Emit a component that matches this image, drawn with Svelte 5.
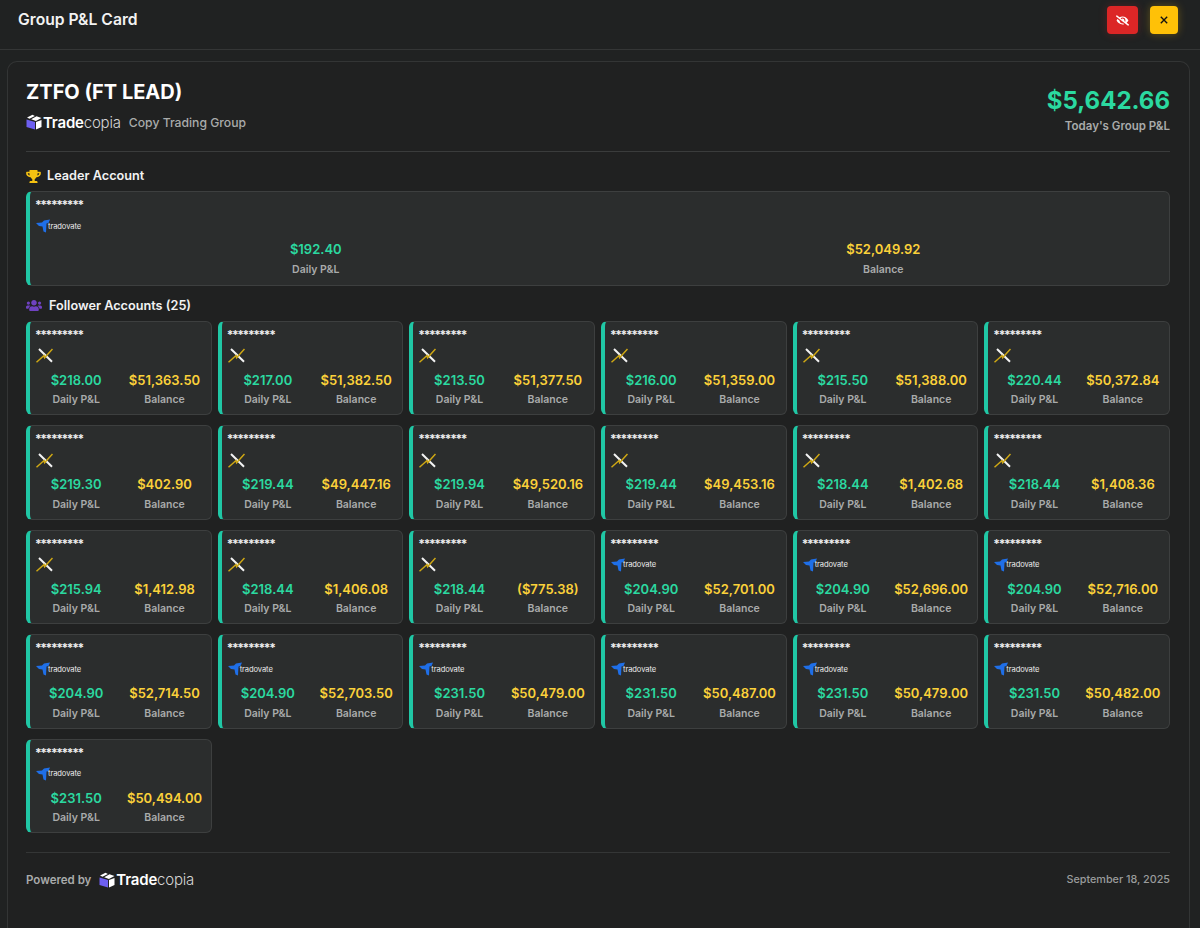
<script>
  const followers = [
    ['x','$218.00','$51,363.50'],['x','$217.00','$51,382.50'],['x','$213.50','$51,377.50'],['x','$216.00','$51,359.00'],['x','$215.50','$51,388.00'],['x','$220.44','$50,372.84'],
    ['x','$219.30','$402.90'],['x','$219.44','$49,447.16'],['x','$219.94','$49,520.16'],['x','$219.44','$49,453.16'],['x','$218.44','$1,402.68'],['x','$218.44','$1,408.36'],
    ['x','$215.94','$1,412.98'],['x','$218.44','$1,406.08'],['x','$218.44','($775.38)'],['t','$204.90','$52,701.00'],['t','$204.90','$52,696.00'],['t','$204.90','$52,716.00'],
    ['t','$204.90','$52,714.50'],['t','$204.90','$52,703.50'],['t','$231.50','$50,479.00'],['t','$231.50','$50,487.00'],['t','$231.50','$50,479.00'],['t','$231.50','$50,482.00'],
    ['t','$231.50','$50,494.00']
  ];
</script>

{#snippet tradecopia()}
  <span class="tc">
    <svg class="cube" viewBox="0 0 16 16" width="16" height="16" aria-hidden="true">
      <path d="M.5 5.5 9 8v7.5L.5 13z" fill="#6d5ff0"/>
      <path d="M10 8l5.5-2V13L10 15.5z" fill="#fff"/>
      <path d="M1 3.6 6.5 .8l2.4 1.2-5.4 2.8zM5.2 5.2l5.3-3 5 1.7-5.6 3z" fill="#fff"/>
    </svg><span class="tc-a">Trade</span><span class="tc-b">copia</span>
  </span>
{/snippet}

{#snippet tradovate()}
  <span class="logo">
    <svg viewBox="0 0 14 14" width="14" height="14" aria-hidden="true">
      <path d="M0 4 6 3.5 8 1.5 14 .5 12.5 4 10.5 4.5 10 13.5 7.5 12.5 6.5 7.5 3 7z" fill="#1f6fe8"/>
    </svg><span class="tv">tradovate</span>
  </span>
{/snippet}

{#snippet xlogo()}
  <span class="logo">
    <svg viewBox="0 0 17 15" width="17" height="15" aria-hidden="true">
      <path d="M3 1 16 13.8" stroke="#f4f4f4" stroke-width="2" fill="none"/>
      <path d="M.5 14.2 8 7.5l.6 2.2L16.5 1" stroke="#cfa814" stroke-width="1.5" fill="none"/>
    </svg>
  </span>
{/snippet}

{#snippet account(a, lead)}
  <div class="acct" class:lead>
    <div class="mask">*********</div>
    <div class="logorow">
      {#if a[0] === 't'}{@render tradovate()}{:else}{@render xlogo()}{/if}
    </div>
    <div class="vals">
      <div class="col"><div class="pl">{a[1]}</div><div class="lbl">Daily P&amp;L</div></div>
      <div class="col"><div class="bal">{a[2]}</div><div class="lbl">Balance</div></div>
    </div>
  </div>
{/snippet}

<div class="page">
  <header class="top">
    <h1>Group P&amp;L Card</h1>
    <div class="btns">
      <button class="red" aria-label="Hide">
        <svg viewBox="0 0 640 512" width="13" height="11" fill="#fff"><path d="M320 400c-75.85 0-137.25-58.71-142.9-133.11L72.2 185.82c-13.79 17.3-26.48 35.59-36.72 55.59a32.35 32.35 0 0 0 0 29.19C89.71 376.41 197.07 448 320 448c26.91 0 52.87-4 77.89-10.46L346 397.39a144.13 144.13 0 0 1-26 2.61zm313.82 58.1l-110.55-85.44a331.25 331.25 0 0 0 81.25-102.07 32.35 32.35 0 0 0 0-29.19C550.29 135.59 442.93 64 320 64a308.15 308.15 0 0 0-147.32 37.7L45.46 3.37A16 16 0 0 0 23 6.18L3.37 31.45A16 16 0 0 0 6.18 53.9l588.36 454.73a16 16 0 0 0 22.46-2.81l19.64-25.27a16 16 0 0 0-2.82-22.45zm-183.72-142l-39.3-30.38A94.75 94.75 0 0 0 416 256a94.76 94.76 0 0 0-121.31-92.21A47.65 47.65 0 0 1 304 192a46.64 46.64 0 0 1-1.54 10l-73.61-56.89A142.31 142.31 0 0 1 320 112a143.92 143.92 0 0 1 144 144c0 21.63-5.29 41.79-13.9 60.11z"/></svg>
      </button>
      <button class="yellow" aria-label="Close">
        <svg viewBox="0 0 10 10" width="8" height="8"><path d="M1 1l8 8M9 1l-8 8" stroke="#111" stroke-width="1.7" fill="none"/></svg>
      </button>
    </div>
  </header>

  <main class="card">
    <section class="head">
      <div>
        <h2>ZTFO (FT LEAD)</h2>
        <div class="sub">{@render tradecopia()}<span class="sub-t">Copy Trading Group</span></div>
      </div>
      <div class="today">
        <div class="amount">$5,642.66</div>
        <div class="today-l">Today's Group P&amp;L</div>
      </div>
    </section>

    <h3 class="leader">
      <svg viewBox="0 0 576 512" width="15" height="13" fill="#f5c211"><path d="M552 64H448V24c0-13.3-10.7-24-24-24H152c-13.3 0-24 10.7-24 24v40H24C10.7 64 0 74.7 0 88v56c0 35.7 22.5 72.4 61.9 100.7 31.5 22.7 69.8 37.1 110 41.7C203.3 338.5 240 360 240 360v72h-48c-35.3 0-64 20.7-64 56v12c0 6.6 5.4 12 12 12h296c6.6 0 12-5.4 12-12v-12c0-35.3-28.7-56-64-56h-48v-72s36.7-21.5 68.1-73.6c40.3-4.6 78.6-19 110-41.7 39.3-28.3 61.9-65 61.9-100.7V88c0-13.3-10.7-24-24-24zM99.3 192.8C74.9 175.2 64 155.6 64 144v-16h64.2c1 32.6 5.8 61.2 12.8 86.2-15.1-5.2-29.2-12.4-41.7-21.4zM512 144c0 16.1-17.7 36.1-35.3 48.8-12.5 9-26.7 16.2-41.8 21.4 7-25 11.8-53.6 12.8-86.2H512v16z"/></svg>
      Leader Account
    </h3>
    {@render account(['t','$192.40','$52,049.92'], true)}

    <h3 class="follow">
      <svg viewBox="0 0 640 512" width="16" height="13" fill="#6f42c1"><path d="M96 224c35.3 0 64-28.7 64-64s-28.7-64-64-64-64 28.7-64 64 28.7 64 64 64zm448 0c35.3 0 64-28.7 64-64s-28.7-64-64-64-64 28.7-64 64 28.7 64 64 64zm32 32h-64c-17.6 0-33.5 7.1-45.1 18.6 40.3 22.1 68.9 62 75.1 109.4h66c17.7 0 32-14.3 32-32v-32c0-35.3-28.7-64-64-64zm-256 0c61.9 0 112-50.1 112-112S381.9 32 320 32 208 82.1 208 144s50.1 112 112 112zm76.8 32h-8.3c-20.8 10-43.9 16-68.5 16s-47.6-6-68.5-16h-8.3C179.6 288 128 339.6 128 403.2V432c0 26.5 21.5 48 48 48h288c26.5 0 48-21.5 48-48v-28.8c0-63.6-51.6-115.2-115.2-115.2zm-223.7-13.4C161.5 263.1 145.6 256 128 256H64c-35.3 0-64 28.7-64 64v32c0 17.7 14.3 32 32 32h65.9c6.3-47.4 34.9-87.3 75.2-109.4z"/></svg>
      Follower Accounts (25)
    </h3>
    <div class="grid">
      {#each followers as a}
        {@render account(a, false)}
      {/each}
    </div>

    <footer class="foot">
      <div class="pow"><span>Powered by</span>{@render tradecopia()}</div>
      <div class="date">September 18, 2025</div>
    </footer>
  </main>
</div>

<style>
  :global(body) { margin: 0; background: #202222; overflow: hidden; }
  .page { height: 928px; overflow: hidden; font-family: Inter, "Liberation Sans", sans-serif; color: #fff; background: #202222; }
  .top { height: 49px; box-sizing: content-box; display: flex; justify-content: space-between; align-items: flex-start; padding: 0 22px 0 18px; border-bottom: 1px solid #343636; }
  h1 { margin: 10px 0 0; font-size: 15.7px; line-height: 20px; font-weight: 600; color: #f2f2f2; }
  .btns { display: flex; gap: 12px; margin-top: 6px; }
  button { border: 0; padding: 0; display: flex; align-items: center; justify-content: center; border-radius: 4px; height: 28px; }
  .red { width: 31px; background: #dc2626; box-shadow: 0 0 8px rgba(220,38,38,.25); }
  .yellow { width: 28px; background: #ffc107; box-shadow: 0 0 8px rgba(255,193,7,.3); }
  .card { margin: 11px 10px 0 7px; padding: 18px 19px 18px 18px; border: 1px solid #333535; border-bottom: 0; border-radius: 10px 10px 0 0; background: #202121; height: 900px; box-sizing: border-box; }
  .head { display: flex; justify-content: space-between; height: 71px; border-bottom: 1px solid #3a3c3c; }
  h2 { margin: 0; font-size: 20px; line-height: 24px; font-weight: 700; color: #fff; }
  .sub { display: flex; align-items: center; gap: 8px; margin-top: 8px; height: 20px; }
  .sub-t { font-size: 12.2px; color: #a9abab; font-weight: 500; }
  .tc { display: inline-flex; align-items: center; font-size: 15px; letter-spacing: -.2px; }
  .cube { margin-right: 1px; }
  .tc-a { font-weight: 600; color: #fff; }
  .tc-b { font-weight: 300; color: #d5d5d5; }
  .today { text-align: right; padding-top: 6px; }
  .amount { font-size: 24px; line-height: 30px; font-weight: 700; color: #2bd9a0; }
  .today-l { font-size: 11.5px; line-height: 16px; margin-top: 2px; font-weight: 600; color: #a9abab; }
  h3 { margin: 0; display: flex; align-items: center; font-size: 12.7px; line-height: 16px; font-weight: 600; color: #f2f2f2; }
  .leader { gap: 6px; margin-top: 16px; margin-bottom: 7px; }
  .follow { gap: 7px; margin-top: 12px; margin-bottom: 7px; }
  .acct { height: 94.5px; box-sizing: border-box; border: 1px solid #3d3f3f; border-left: 4px solid #20c7a5; border-radius: 6px; background: #2b2d2d; padding: 6px 6px 0; }
  .mask { font-size: 12px; line-height: 14px; font-weight: 700; color: #f0f0f0; height: 14px; letter-spacing: -1.4px; margin-left: -1px; }
  .logorow { height: 16px; margin-top: 6px; display: flex; align-items: center; }
  .logo { display: inline-flex; align-items: center; }
  .tv { font-size: 7.6px; color: #eaeaea; margin-left: -2px; letter-spacing: -.1px; }
  .vals { display: grid; grid-template-columns: 1fr 1fr; gap: 8px; margin-top: 7px; }
  .lead .vals { margin-top: 6px; }
  .col { text-align: center; }
  .pl, .bal { font-size: 13px; line-height: 18px; font-weight: 600; }
  .pl { color: #2bd9a0; }
  .bal { color: #fbd13a; }
  .lbl { font-size: 10.5px; line-height: 13px; margin-top: 4.5px; font-weight: 600; color: #a9abab; }
  .grid { display: grid; grid-template-columns: repeat(6, 1fr); column-gap: 6px; row-gap: 10px; }
  .foot { margin-top: 19px; padding-top: 17px; border-top: 1px solid #343636; display: flex; justify-content: space-between; align-items: center; }
  .pow { display: flex; align-items: center; gap: 8px; font-size: 11.5px; font-weight: 600; color: #a9abab; }
  .date { font-size: 10.8px; font-weight: 500; color: #9a9c9c; }
</style>
